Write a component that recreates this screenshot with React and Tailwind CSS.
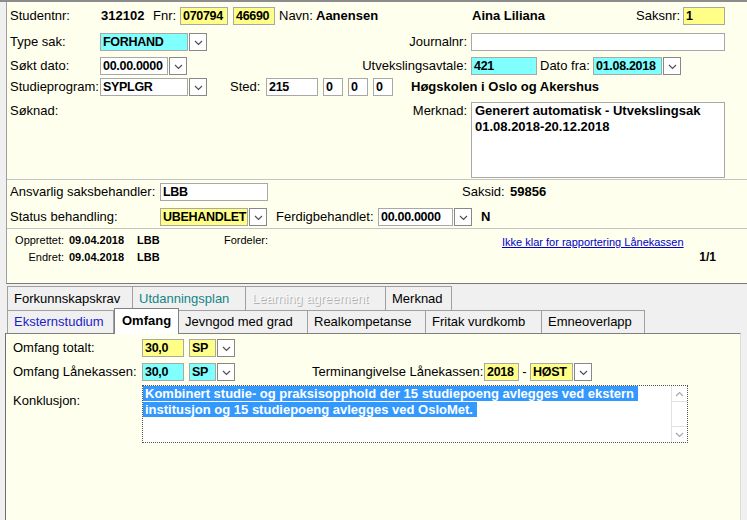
import React from 'react';

function Chevron({ up = false, color = '#505050' }) {
  return (
    <svg width="9" height="6" viewBox="0 0 9 6" className="block">
      <path d={up ? 'M1 5 L4.5 1.5 L8 5' : 'M1 1 L4.5 4.5 L8 1'} fill="none" stroke={color} strokeWidth="1.2" />
    </svg>
  );
}

function Field({ className = '', bg = 'bg-white', children }) {
  return (
    <div className={`h-[18px] shrink-0 overflow-hidden whitespace-nowrap border border-[#a8a8a8] px-[2px] text-[12.5px] font-bold leading-[16px] tracking-[-0.3px] ${bg} ${className}`}>
      {children}
    </div>
  );
}

function Select({ className = '', bg = 'bg-white', children }) {
  return (
    <div className="flex h-[18px] shrink-0 gap-[1px]">
      <Field className={className} bg={bg}>{children}</Field>
      <div className="flex h-[18px] w-[18px] items-center justify-center border border-[#888888] bg-white pt-[1px]">
        <Chevron />
      </div>
    </div>
  );
}

function Label({ className = '', children }) {
  return <div className={`shrink-0 whitespace-nowrap ${className}`}>{children}</div>;
}

function Tab({ className = '', children }) {
  return (
    <div className={`flex shrink-0 items-center whitespace-nowrap border-r border-t border-[#a0a0a0] bg-[#f0f0f0] pl-[6px] ${className}`}>
      {children}
    </div>
  );
}

export default function App() {
  return (
    <div className="h-[520px] w-[747px] overflow-hidden border-t-2 border-[#8c8c8c] bg-[#f0f0f0] font-['Liberation_Sans',Arial,sans-serif] text-[13px] leading-[16px] text-black">
      {/* Saksdetaljer */}
      <div className="ml-[6px] h-[282px] border-b border-l border-b-[#7a7a7a] border-l-[#a0a0a0] bg-[#ffffee] pt-[5px]">
        <div className="flex h-[18px] items-center pl-[3px]">
          <Label className="w-[91px]">Studentnr:</Label>
          <Label className="w-[52px] font-bold">312102</Label>
          <Label className="w-[27px]">Fnr:</Label>
          <Field className="w-[48px]" bg="bg-[#ffff88]">070794</Field>
          <Field className="ml-[5px] w-[42px]" bg="bg-[#ffff88]">46690</Field>
          <Label className="ml-[4px] w-[37px]">Navn:</Label>
          <Label className="w-[156px] font-bold">Aanensen</Label>
          <Label className="w-[164px] font-bold">Aina Liliana</Label>
          <Label className="w-[47px]">Saksnr:</Label>
          <Field className="w-[42px]" bg="bg-[#ffff88]">1</Field>
        </div>

        <div className="mt-[8px] flex h-[18px] items-center pl-[3px]">
          <Label className="w-[90px]">Type sak:</Label>
          <Select className="w-[88px]" bg="bg-[#80ffff]">FORHAND</Select>
          <Label className="flex-1 pr-[4px] text-right">Journalnr:</Label>
          <div className="flex w-[276px] shrink-0">
            <Field className="w-[254px]" />
          </div>
        </div>

        <div className="mt-[6px] flex h-[18px] items-center pl-[3px]">
          <Label className="w-[90px]">Søkt dato:</Label>
          <Select className="w-[68px]">00.00.0000</Select>
          <Label className="flex-1 pr-[4px] text-right">Utvekslingsavtale:</Label>
          <div className="flex w-[276px] shrink-0 items-center">
            <Field className="w-[66px]" bg="bg-[#80ffff]">421</Field>
            <Label className="ml-[3px] w-[53px]">Dato fra:</Label>
            <Select className="w-[69px]" bg="bg-[#80ffff]">01.08.2018</Select>
          </div>
        </div>

        <div className="mt-[3px] flex h-[18px] items-center pl-[3px]">
          <Label className="w-[90px]">Studieprogram:</Label>
          <Select className="w-[88px]">SYPLGR</Select>
          <Label className="ml-[23px] w-[36px]">Sted:</Label>
          <Field className="w-[52px]">215</Field>
          <Field className="ml-[5px] w-[20px]">0</Field>
          <Field className="ml-[5px] w-[20px]">0</Field>
          <Field className="ml-[5px] w-[20px]">0</Field>
          <Label className="ml-[18px] font-bold">Høgskolen i Oslo og Akershus</Label>
        </div>

        <div className="mt-[6px] flex items-start pl-[3px]">
          <Label className="mt-[1px]">Søknad:</Label>
          <Label className="mt-[1px] flex-1 pr-[4px] text-right">Merknad:</Label>
          <div className="flex w-[276px] shrink-0">
            <div className="h-[76px] w-[254px] border border-[#a8a8a8] bg-white px-[3px] font-bold leading-[16px]">
              <div>Generert automatisk - Utvekslingsak</div>
              <div>01.08.2018-20.12.2018</div>
            </div>
          </div>
        </div>

        <div className="mt-[1px] h-px bg-[#c4c4c4]" />

        <div className="mt-[3px] flex h-[18px] items-center pl-[3px]">
          <Label className="w-[150px]">Ansvarlig saksbehandler:</Label>
          <Field className="w-[108px]">LBB</Field>
          <Label className="ml-[194px] w-[48px]">Saksid:</Label>
          <Label className="font-bold">59856</Label>
        </div>

        <div className="mt-[7px] flex h-[18px] items-center pl-[3px]">
          <Label className="w-[150px]">Status behandling:</Label>
          <Select className="w-[88px]" bg="bg-[#ffff88]">UBEHANDLET</Select>
          <Label className="ml-[9px] w-[102px]">Ferdigbehandlet:</Label>
          <Select className="w-[75px]">00.00.0000</Select>
          <Label className="ml-[9px] font-bold">N</Label>
        </div>

        <div className="mt-[2px] h-px bg-[#c4c4c4]" />

        <div className="mt-[4px] flex h-[14px] items-center pl-[3px] text-[11px] leading-[14px]">
          <Label className="w-[54px] text-right">Opprettet:</Label>
          <Label className="ml-[5px] w-[68px] font-bold">09.04.2018</Label>
          <Label className="w-[87px] font-bold">LBB</Label>
          <Label className="w-[278px]">Fordeler:</Label>
          <Label className="mt-[3px] text-[#0000cc] underline">Ikke klar for rapportering Lånekassen</Label>
        </div>

        <div className="mt-[3px] flex h-[14px] items-center pl-[3px] text-[11px] leading-[14px]">
          <Label className="w-[54px] text-right">Endret:</Label>
          <Label className="ml-[5px] w-[68px] font-bold">09.04.2018</Label>
          <Label className="font-bold">LBB</Label>
          <Label className="ml-auto mr-[31px] text-[12px] font-bold">1/1</Label>
        </div>
      </div>

      {/* Faner */}
      <div className="mt-[2px] flex h-[24px] pl-[7px]">
        <Tab className="w-[126px] border-l">Forkunnskapskrav</Tab>
        <Tab className="w-[113px] text-[#138585]">Utdanningsplan</Tab>
        <Tab className="w-[140px] bg-[#c6c6c6] text-[#f6f6f6] [text-shadow:1px_1px_0_#b0b0b0]">Learning agreement</Tab>
        <Tab className="w-[66px]">Merknad</Tab>
      </div>
      <div className="flex h-[23px] items-start pl-[7px]">
        <Tab className="h-[23px] w-[107px] border-l text-[#1c1cc8]">Eksternstudium</Tab>
        <div className="relative z-10 -mt-[2px] flex h-[26px] w-[65px] shrink-0 items-center border-l border-r border-t border-[#808080] bg-white pb-[2px] pl-[7px] font-bold">
          Omfang
        </div>
        <Tab className="h-[23px] w-[129px]">Jevngod med grad</Tab>
        <Tab className="h-[23px] w-[118px]">Realkompetanse</Tab>
        <Tab className="h-[23px] w-[116px]">Fritak vurdkomb</Tab>
        <Tab className="h-[23px] w-[103px]">Emneoverlapp</Tab>
      </div>

      {/* Omfang */}
      <div className="ml-[5px] h-[187px] w-[736px] border-l border-r border-t border-l-[#707070] border-r-[#dcdcdc] border-t-[#808080] bg-[#ffffee] pl-[7px] pt-[5px]">
        <div className="flex h-[18px] items-center">
          <Label className="w-[129px]">Omfang totalt:</Label>
          <Field className="w-[42px]" bg="bg-[#ffff88]">30,0</Field>
          <div className="ml-[5px]">
            <Select className="w-[27px]" bg="bg-[#ffff88]">SP</Select>
          </div>
        </div>

        <div className="mt-[6px] flex h-[18px] items-center">
          <Label className="w-[129px]">Omfang Lånekassen:</Label>
          <Field className="w-[42px]" bg="bg-[#80ffff]">30,0</Field>
          <div className="ml-[5px]">
            <Select className="w-[27px]" bg="bg-[#80ffff]">SP</Select>
          </div>
          <Label className="ml-[77px] w-[172px]">Terminangivelse Lånekassen:</Label>
          <Field className="w-[35px]" bg="bg-[#ffff88]">2018</Field>
          <Label className="w-[11px] text-center">-</Label>
          <Select className="w-[43px]" bg="bg-[#ffff88]">HØST</Select>
        </div>

        <div className="mt-[4px] flex items-start">
          <Label className="w-[129px] pt-[8px]">Konklusjon:</Label>
          <div className="flex h-[58px] w-[546px] shrink-0 border border-dotted border-[#555555] bg-white">
            <div className="flex-1 font-bold leading-[16px]">
              <div>
                <span className="whitespace-pre bg-[#3399ff] pl-[2px] text-white">Kombinert studie- og praksisopphold der 15 studiepoeng avlegges ved ekstern </span>
              </div>
              <div>
                <span className="whitespace-pre bg-[#3399ff] pl-[2px] text-white">institusjon og 15 studiepoeng avlegges ved OsloMet. </span>
              </div>
            </div>
            <div className="flex w-[16px] shrink-0 flex-col border-l border-[#e2e2e2]">
              <div className="flex h-[16px] items-center justify-center border-b border-[#e2e2e2]">
                <Chevron up color="#a8a8a8" />
              </div>
              <div className="flex-1" />
              <div className="flex h-[16px] items-center justify-center border-t border-[#e2e2e2]">
                <Chevron color="#a8a8a8" />
              </div>
            </div>
          </div>
        </div>
      </div>
    </div>
  );
}
